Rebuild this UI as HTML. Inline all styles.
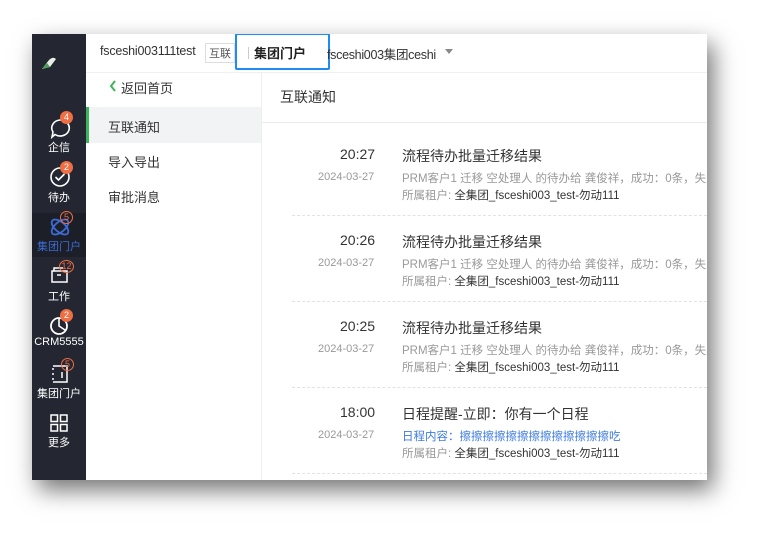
<!DOCTYPE html>
<html><head><meta charset="utf-8"><style>
*{margin:0;padding:0;box-sizing:border-box}
body{width:772px;height:545px;background:#fff;position:relative;overflow:hidden;font-family:"Liberation Sans","Noto Sans CJK SC",sans-serif;}
.win{position:absolute;left:32px;top:34px;width:675px;height:446px;background:#fff;box-shadow:6px 10px 22px rgba(0,0,0,.55);overflow:hidden}
.side{position:absolute;left:0;top:0;width:54px;height:446px;background:#242731}
.a{position:absolute}
.lbl{position:absolute;width:54px;text-align:center;color:#fff;font-size:11px;left:0}
.badge{position:absolute;width:13px;height:13px;border-radius:50%;background:#f06e43;color:#fff;font-size:9px;line-height:13px;text-align:center}
.bo{background:transparent;border:1.5px solid #f06e43;color:#f06e43;line-height:10px}
.t{position:absolute;white-space:nowrap}
.dash{position:absolute;left:260px;width:420px;border-top:1px dashed #e2e2e2}
</style></head><body>
<div class="win">
 <div class="side">
  <svg class="a" style="left:9px;top:22px" width="16" height="14"><path d="M1 13 L8 4 Q12 0 15 3 L9 11Z" fill="#e8eee6"/><path d="M1 13 L6 7 L9 11Z" fill="#4aa05a"/></svg>
  <svg class="a" style="left:16px;top:83px" width="24" height="24"><path d="M12 3a9 8 0 1 1-5 14.5L4 20l1-5A9 8 0 0 1 12 3z" fill="none" stroke="#fff" stroke-width="1.6"/></svg>
  <div class="badge" style="left:28px;top:77px">4</div>
  <div class="lbl" style="top:105px">企信</div>
  <svg class="a" style="left:16px;top:131px" width="24" height="24"><circle cx="12" cy="12" r="9" fill="none" stroke="#fff" stroke-width="1.6"/><path d="M7.5 12l3 3 6-6" fill="none" stroke="#fff" stroke-width="1.6"/></svg>
  <div class="badge" style="left:28px;top:127px">2</div>
  <div class="lbl" style="top:155px">待办</div>
  <div class="a" style="left:0;top:179px;width:54px;height:44px;background:#1c1f27"></div>
  <svg class="a" style="left:16px;top:181px" width="24" height="24"><ellipse cx="12" cy="12" rx="10" ry="5" transform="rotate(40 12 12)" fill="none" stroke="#3d6bd6" stroke-width="1.8"/><ellipse cx="12" cy="12" rx="10" ry="5" transform="rotate(-40 12 12)" fill="none" stroke="#3d6bd6" stroke-width="1.8"/></svg>
  <div class="badge bo" style="left:28px;top:177px">5</div>
  <div class="lbl" style="top:204px;color:#3d6bd6">集团门户</div>
  <svg class="a" style="left:16px;top:230px" width="24" height="24"><rect x="4" y="7" width="15" height="11" fill="none" stroke="#fff" stroke-width="1.5"/><path d="M6 7V4h9" fill="none" stroke="#fff" stroke-width="1.5"/><path d="M9 11h4" stroke="#fff" stroke-width="1.5"/></svg>
  <div class="badge bo" style="left:27px;top:226px;width:15px">12</div>
  <div class="lbl" style="top:254px">工作</div>
  <svg class="a" style="left:16px;top:280px" width="24" height="24"><circle cx="11" cy="12" r="8" fill="none" stroke="#fff" stroke-width="1.8"/><path d="M11 4v8l6 4" fill="none" stroke="#fff" stroke-width="1.6"/></svg>
  <div class="badge" style="left:28px;top:275px">2</div>
  <div class="lbl" style="top:302px">CRM5555</div>
  <svg class="a" style="left:16px;top:328px" width="24" height="24"><path d="M5 4h14v16H5" fill="none" stroke="#fff" stroke-width="1.5"/><path d="M5 6v2M5 11v2M5 16v2M14 10v6" stroke="#fff" stroke-width="1.5"/></svg>
  <div class="badge bo" style="left:29px;top:324px">5</div>
  <div class="lbl" style="top:351px">集团门户</div>
  <svg class="a" style="left:17px;top:379px" width="20" height="20"><rect x="2" y="2" width="6.5" height="6.5" fill="none" stroke="#fff" stroke-width="1.5"/><rect x="11.5" y="2" width="6.5" height="6.5" fill="none" stroke="#fff" stroke-width="1.5"/><rect x="2" y="11.5" width="6.5" height="6.5" fill="none" stroke="#fff" stroke-width="1.5"/><rect x="11.5" y="11.5" width="6.5" height="6.5" fill="none" stroke="#fff" stroke-width="1.5"/></svg>
  <div class="lbl" style="top:400px">更多</div>
 </div>
 <div class="t" style="left:68px;top:10px;font-size:12.5px;color:#333;letter-spacing:-0.2px">fsceshi003111test</div>
 <div class="t" style="left:173px;top:9px;font-size:11px;color:#555;border:1px solid #ddd;padding:1px 3px">互联</div>
 <div class="a" style="left:216px;top:13px;width:1px;height:12px;background:#ccc"></div>
 <div class="a" style="left:203px;top:-1px;width:95px;height:37px;border:2px solid #1e8cf0;border-radius:2px"></div>
 <div class="t" style="left:222px;top:9px;font-size:13px;color:#222;font-weight:bold">集团门户</div>
 <div class="t" style="left:295px;top:10px;font-size:12.5px;color:#333;letter-spacing:-0.3px">fsceshi003集团ceshi</div>
 <svg class="a" style="left:413px;top:15px" width="9" height="6"><path d="M0 0h8l-4 5z" fill="#888"/></svg>
 <div class="a" style="left:54px;top:38px;width:621px;height:1px;background:#f0f0f0"></div>
 <div class="a" style="left:229px;top:38px;width:1px;height:408px;background:#eee"></div>
 <svg class="a" style="left:77px;top:46px" width="8" height="12"><path d="M6 1L2 6l4 5" fill="none" stroke="#3cb55a" stroke-width="2"/></svg>
 <div class="t" style="left:89px;top:44px;font-size:13px;color:#333">返回首页</div>
 <div class="a" style="left:54px;top:73px;width:175px;height:36px;background:#f2f3f5"></div>
 <div class="a" style="left:54px;top:73px;width:3px;height:36px;background:#3cb55a"></div>
 <div class="t" style="left:76px;top:83px;font-size:13px;color:#333">互联通知</div>
 <div class="t" style="left:76px;top:118px;font-size:13px;color:#333">导入导出</div>
 <div class="t" style="left:76px;top:153px;font-size:13px;color:#333">审批消息</div>
 <div class="t" style="left:248px;top:53px;font-size:14px;color:#333">互联通知</div>
 <div class="a" style="left:230px;top:88px;width:445px;height:1px;background:#ececec"></div>
</div>
<div style="position:absolute;left:32px;top:34px;width:675px;height:446px;overflow:hidden">
 <div class="t" style="left:308px;top:112px;font-size:14px;color:#333">20:27</div>
 <div class="t" style="left:370px;top:112px;font-size:14px;color:#333">流程待办批量迁移结果</div>
 <div class="t" style="left:286px;top:137px;font-size:11px;color:#999">2024-03-27</div>
 <div class="t" style="left:370px;top:136px;font-size:11.5px;color:#999">PRM客户1 迁移 空处理人 的待办给 龚俊祥，成功：0条，失败</div>
 <div class="t" style="left:370px;top:153px;font-size:11.5px;color:#999">所属租户: <span style="color:#333">全集团_fsceshi003_test-勿动111</span></div>
 <div class="dash" style="top:181px"></div>
 <div class="t" style="left:308px;top:198px;font-size:14px;color:#333">20:26</div>
 <div class="t" style="left:370px;top:198px;font-size:14px;color:#333">流程待办批量迁移结果</div>
 <div class="t" style="left:286px;top:223px;font-size:11px;color:#999">2024-03-27</div>
 <div class="t" style="left:370px;top:222px;font-size:11.5px;color:#999">PRM客户1 迁移 空处理人 的待办给 龚俊祥，成功：0条，失败</div>
 <div class="t" style="left:370px;top:239px;font-size:11.5px;color:#999">所属租户: <span style="color:#333">全集团_fsceshi003_test-勿动111</span></div>
 <div class="dash" style="top:267px"></div>
 <div class="t" style="left:308px;top:284px;font-size:14px;color:#333">20:25</div>
 <div class="t" style="left:370px;top:284px;font-size:14px;color:#333">流程待办批量迁移结果</div>
 <div class="t" style="left:286px;top:309px;font-size:11px;color:#999">2024-03-27</div>
 <div class="t" style="left:370px;top:308px;font-size:11.5px;color:#999">PRM客户1 迁移 空处理人 的待办给 龚俊祥，成功：0条，失败</div>
 <div class="t" style="left:370px;top:325px;font-size:11.5px;color:#999">所属租户: <span style="color:#333">全集团_fsceshi003_test-勿动111</span></div>
 <div class="dash" style="top:353px"></div>
 <div class="t" style="left:308px;top:370px;font-size:14px;color:#333">18:00</div>
 <div class="t" style="left:370px;top:370px;font-size:14px;color:#333">日程提醒-立即：你有一个日程</div>
 <div class="t" style="left:286px;top:395px;font-size:11px;color:#999">2024-03-27</div>
 <div class="t" style="left:370px;top:394px;font-size:11.5px;color:#3d7be0">日程内容：擦擦擦擦擦擦擦擦擦擦擦擦擦吃</div>
 <div class="t" style="left:370px;top:411px;font-size:11.5px;color:#999">所属租户: <span style="color:#333">全集团_fsceshi003_test-勿动111</span></div>
 <div class="dash" style="top:439px"></div>
</div>
</body></html>
